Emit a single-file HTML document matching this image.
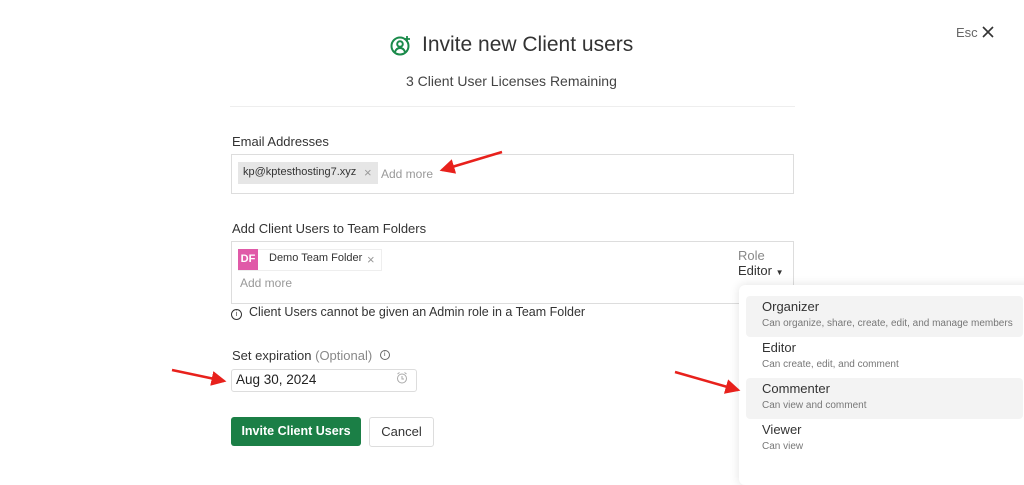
<!DOCTYPE html>
<html><head><style>
body{margin:0;width:1024px;height:470px;background:#fff;font-family:"Liberation Sans",sans-serif;color:#333;position:relative;overflow:hidden}
.a{position:absolute;white-space:nowrap}
</style></head><body>
<svg class="a" style="left:390px;top:34px" width="22" height="22" viewBox="0 0 22 22" fill="none" stroke="#1a8a4a" stroke-width="2"><circle cx="10" cy="12" r="8.5"/><circle cx="10" cy="10" r="2.8"/><path d="M5 18c1-3 3-4 5-4s4 1 5 4"/><path d="M17 2v6M14 5h6" stroke-width="1.8"/></svg>
<div class="a" style="left:422px;top:33px;font-size:21px;color:#333">Invite new Client users</div>
<div class="a" style="left:406px;top:73px;font-size:14px;color:#444">3 Client User Licenses Remaining</div>
<div class="a" style="left:230px;top:106px;width:565px;height:1px;background:#eee"></div>
<div class="a" style="left:956px;top:25px;font-size:13px;color:#666">Esc</div>
<svg class="a" style="left:982px;top:26px" width="12" height="12" viewBox="0 0 12 12" stroke="#333" stroke-width="1.6"><path d="M1 1l10 10M11 1L1 11"/></svg>

<div class="a" style="left:232px;top:134px;font-size:13px;color:#333">Email Addresses</div>
<div class="a" style="left:231px;top:154px;width:561px;height:38px;border:1px solid #ddd"></div>
<div class="a" style="left:238px;top:162px;width:140px;height:22px;background:#e6e6e6"></div>
<div class="a" style="left:243px;top:166px;font-size:11px;color:#333">kp@kptesthosting7.xyz</div>
<div class="a" style="left:364px;top:165px;font-size:13px;color:#999">×</div>
<div class="a" style="left:381px;top:167px;font-size:12px;color:#999">Add more</div>

<div class="a" style="left:232px;top:221px;font-size:13px;color:#333">Add Client Users to Team Folders</div>
<div class="a" style="left:231px;top:241px;width:561px;height:61px;border:1px solid #ddd"></div>
<div class="a" style="left:238px;top:249px;width:142px;height:20px;border:1px solid #eee"></div>
<div class="a" style="left:238px;top:249px;width:20px;height:21px;background:#e05aa8;color:#fff;font-size:11px;font-weight:bold;text-align:center;line-height:21px">DF</div>
<div class="a" style="left:269px;top:252px;font-size:11px;color:#333">Demo Team Folder</div>
<div class="a" style="left:367px;top:252px;font-size:13px;color:#999">×</div>
<div class="a" style="left:240px;top:276px;font-size:12px;color:#999">Add more</div>
<div class="a" style="left:738px;top:248px;font-size:13px;color:#888">Role</div>
<div class="a" style="left:738px;top:263px;font-size:13px;color:#333">Editor <span style="font-size:8px">▼</span></div>
<div class="a" style="left:231px;top:305px;font-size:12.5px;color:#333"><span style="display:inline-block;width:9px;height:9px;border:1px solid #333;border-radius:50%;font-size:7px;text-align:center;line-height:9px;margin-right:7px;vertical-align:0px">i</span>Client Users cannot be given an Admin role in a Team Folder</div>

<div class="a" style="left:232px;top:348px;font-size:13px;color:#333">Set expiration <span style="color:#888">(Optional)</span> <span style="display:inline-block;width:8px;height:8px;border:1px solid #666;border-radius:50%;font-size:6px;text-align:center;line-height:8px;margin-left:4px;vertical-align:4px">i</span></div>
<div class="a" style="left:231px;top:369px;width:184px;height:21px;border:1px solid #ddd;border-radius:3px"></div>
<div class="a" style="left:236px;top:372px;font-size:13.5px;color:#222">Aug 30, 2024</div>
<svg class="a" style="left:396px;top:372px" width="12" height="12" viewBox="0 0 12 12" fill="none" stroke="#aaa"><circle cx="6" cy="6.5" r="4.5"/><path d="M6 4v3h2M1.5 2l2-1.5M10.5 2l-2-1.5"/></svg>

<div class="a" style="left:231px;top:417px;width:130px;height:29px;background:#1b7f46;border-radius:3px;color:#fff;font-size:12.5px;font-weight:bold;text-align:center;line-height:29px">Invite Client Users</div>
<div class="a" style="left:369px;top:417px;width:63px;height:28px;border:1px solid #ddd;border-radius:3px;font-size:13px;text-align:center;line-height:28px;color:#333">Cancel</div>

<div class="a" style="left:739px;top:285px;width:300px;height:200px;background:#fff;border-radius:6px;box-shadow:0 0 10px rgba(0,0,0,.12)"></div>
<div class="a" style="left:746px;top:296px;width:277px;height:41px;background:#f3f3f3;border-radius:4px"></div>
<div class="a" style="left:746px;top:378px;width:277px;height:41px;background:#f3f3f3;border-radius:4px"></div>
<div class="a" style="left:762px;top:299px;font-size:13px;color:#333">Organizer</div>
<div class="a" style="left:762px;top:318px;font-size:10px;color:#777">Can organize, share, create, edit, and manage members</div>
<div class="a" style="left:762px;top:340px;font-size:13px;color:#333">Editor</div>
<div class="a" style="left:762px;top:359px;font-size:10px;color:#777">Can create, edit, and comment</div>
<div class="a" style="left:762px;top:381px;font-size:13px;color:#333">Commenter</div>
<div class="a" style="left:762px;top:400px;font-size:10px;color:#777">Can view and comment</div>
<div class="a" style="left:762px;top:422px;font-size:13px;color:#333">Viewer</div>
<div class="a" style="left:762px;top:441px;font-size:10px;color:#777">Can view</div>

<svg class="a" style="left:0;top:0" width="1024" height="470">
<defs><marker id="m" markerWidth="6" markerHeight="6" refX="5" refY="3" orient="auto"><path d="M0 0L6 3L0 6z" fill="#e8211c"/></marker></defs>
<g stroke="#e8211c" stroke-width="2.5" marker-end="url(#m)">
<line x1="502" y1="152" x2="442" y2="170"/>
<line x1="172" y1="370" x2="224" y2="381"/>
<line x1="675" y1="372" x2="738" y2="390"/>
</g></svg>
</body></html>
